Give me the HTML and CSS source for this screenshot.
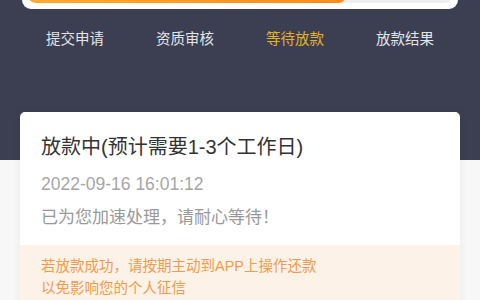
FILE: index.html
```html
<!DOCTYPE html>
<html>
<head>
<meta charset="utf-8">
<link rel="stylesheet" href="styles.css">
</head>
<body>
<div class="header">
  <div class="progress-card">
    <div class="track"><div class="fill" style="width:75%"></div></div>
  </div>
  <div class="tabs">
    <span class="tab">提交申请</span>
    <span class="tab">资质审核</span>
    <span class="tab active">等待放款</span>
    <span class="tab">放款结果</span>
  </div>
</div>
<div class="card">
  <div class="card-body">
    <div class="title">放款中(预计需要1-3个工作日)</div>
    <div class="date">2022-09-16 16:01:12</div>
    <div class="msg">已为您加速处理，请耐心等待！</div>
  </div>
  <div class="notice">
    <p>若放款成功，请按期主动到APP上操作还款</p>
    <p>以免影响您的个人征信</p>
  </div>
</div>
</body>
</html>
```
FILE: styles.css
```css
html, body {
  margin: 0;
  padding: 0;
  background: #f7f7f8;
  font-family: "Liberation Sans", "Noto Sans CJK SC", sans-serif;
  overflow: hidden;
}
.header {
  background: #3b3f51;
  height: 160px;
  overflow: hidden;
}
.progress-card {
  margin: -12px 22px 0;
  background: #fff;
  border-radius: 0 0 9px 9px;
  padding: 0 6px 6px;
}
.track {
  height: 15px;
  background: #eeeeee;
  border-radius: 8px;
  overflow: hidden;
}
.fill {
  height: 100%;
  background: linear-gradient(90deg, #ffaa33, #ff8a1c);
  border-radius: 8px;
}
.tabs {
  display: flex;
  padding: 20px 20px 0;
}
.tab {
  flex: 1;
  text-align: center;
  color: #e4e5e9;
  font-size: 14.5px;
  line-height: 20px;
}
.tab.active {
  color: #e2b22c;
}
.card {
  margin: -48px 20px 0;
  background: #fff;
  border-radius: 5px;
  box-shadow: 0 0 8px rgba(0, 0, 0, 0.06);
  overflow: hidden;
}
.card-body {
  padding: 21px 21px 15px;
}
.title {
  font-size: 20px;
  color: #333;
  line-height: 28px;
}
.date {
  margin-top: 12px;
  font-size: 17.5px;
  color: #a6a6a6;
  line-height: 22px;
}
.msg {
  margin-top: 11px;
  font-size: 17px;
  color: #999;
  line-height: 24px;
}
.notice {
  background: #fdf2e8;
  padding: 10px 21px 12px;
}
.notice p {
  margin: 0;
  font-size: 14.5px;
  line-height: 22px;
  color: #f29b4c;
}
```
